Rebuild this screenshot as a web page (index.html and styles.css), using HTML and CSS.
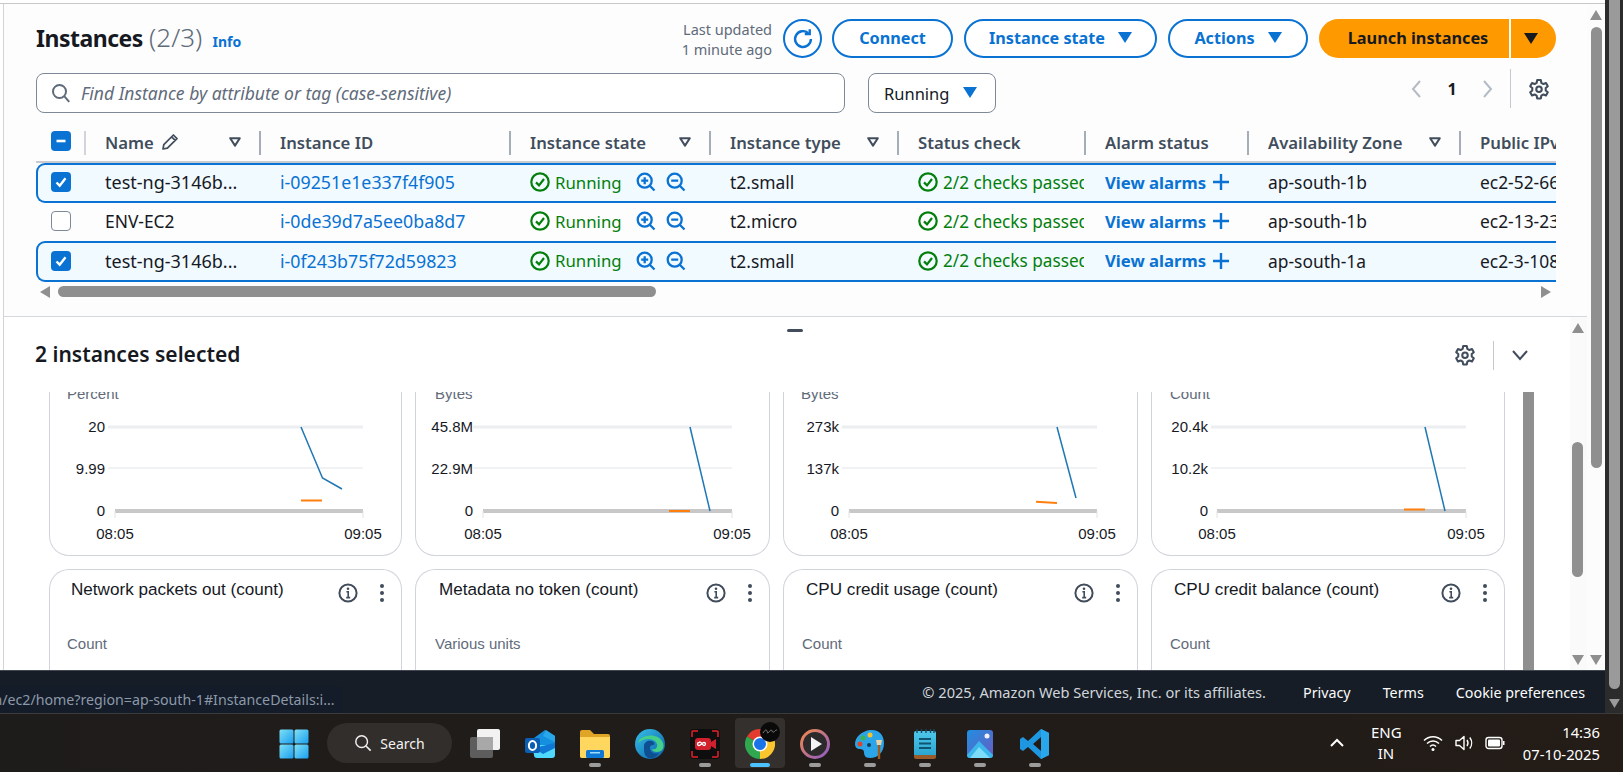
FILE: index.html
```html
<!DOCTYPE html>
<html lang="en">
<head>
<meta charset="utf-8">
<title>Instances | EC2</title>
<link rel="stylesheet" href="styles.css">
</head>
<body>
<svg class="sprite" aria-hidden="true">
  <symbol id="i-gear" viewBox="0 0 16 16"><path d="M6.7 1.5h2.6l.4 2 1.5.9 1.9-.7 1.3 2.3-1.5 1.3v1.8l1.5 1.3-1.3 2.3-1.9-.7-1.5.9-.4 2H6.7l-.4-2-1.5-.9-1.9.7-1.3-2.3 1.5-1.3V7.3L1.6 6l1.3-2.3 1.9.7 1.5-.9z" fill="none" stroke="currentColor" stroke-width="1.5" stroke-linejoin="round"/><circle cx="8" cy="8.2" r="2" fill="none" stroke="currentColor" stroke-width="1.5"/></symbol>
  <symbol id="i-filter" viewBox="0 0 14 14"><path d="M2.2 3.2h9.6L7 10.6z" fill="none" stroke="currentColor" stroke-width="2" stroke-linejoin="round"/></symbol>
  <symbol id="i-caret" viewBox="0 0 14 12"><path d="M0 0h14L7 11z" fill="currentColor"/></symbol>
  <symbol id="i-ok" viewBox="0 0 20 20"><circle cx="10" cy="10" r="8.7" fill="none" stroke="currentColor" stroke-width="2.200"/><path d="M6 10.400l3 3 5-6.400" fill="none" stroke="currentColor" stroke-width="2.200"/></symbol>
  <symbol id="i-zin" viewBox="0 0 20 20"><circle cx="8.700" cy="8.700" r="7" fill="none" stroke="currentColor" stroke-width="2.300"/><path d="M5.200 8.700h7M8.700 5.200v7M13.800 13.800l4.700 4.700" fill="none" stroke="currentColor" stroke-width="2.300"/></symbol>
  <symbol id="i-zout" viewBox="0 0 20 20"><circle cx="8.700" cy="8.700" r="7" fill="none" stroke="currentColor" stroke-width="2.300"/><path d="M5.200 8.700h7M13.800 13.800l4.700 4.700" fill="none" stroke="currentColor" stroke-width="2.300"/></symbol>
  <symbol id="i-plus" viewBox="0 0 16 16"><path d="M8 0v16M0 8h16" fill="none" stroke="currentColor" stroke-width="2.400"/></symbol>
  <symbol id="i-check" viewBox="0 0 20 20"><rect width="20" height="20" rx="4" fill="#0972d3"/><path d="M5.500 10.500l3.200 3.200 5.800-7.400" fill="none" stroke="#fff" stroke-width="2.400"/></symbol>
  <symbol id="i-info" viewBox="0 0 20 20"><circle cx="10" cy="10" r="8.600" fill="none" stroke="currentColor" stroke-width="2"/><circle cx="10" cy="5.800" r="1.300" fill="currentColor"/><path d="M8.400 8.800H10.200V14.400M8.200 14.600h4" fill="none" stroke="currentColor" stroke-width="1.600"/></symbol>
  <symbol id="i-dots" viewBox="0 0 6 20"><circle cx="3" cy="3" r="2" fill="currentColor"/><circle cx="3" cy="10" r="2" fill="currentColor"/><circle cx="3" cy="17" r="2" fill="currentColor"/></symbol>
  <symbol id="tri-up" viewBox="0 0 12 10"><path d="M6 0l6 10H0z" fill="currentColor"/></symbol>
  <symbol id="tri-down" viewBox="0 0 12 10"><path d="M6 10L0 0h12z" fill="currentColor"/></symbol>
</svg>

<div class="app">
  <div class="main">
    <div class="content">
      <div class="panels">
        <section class="upper">
          <header class="top-bar">
            <h1 class="page-title"><span class="title-main">Instances</span> <span class="count">(2/3)</span> <a class="info-link">Info</a></h1>
            <div class="actions">
              <div class="updated">Last updated<br>1 minute ago</div>
              <button class="btn btn-icon"><svg class="refresh" viewBox="0 0 20 20"><path d="M16.600 10a6.600 6.600 0 1 1-2.200-4.900" fill="none" stroke="currentColor" stroke-width="2"/><path d="M15.600 1.800v4.100h-4.100" fill="none" stroke="currentColor" stroke-width="2"/></svg></button>
              <button class="btn btn-connect">Connect</button>
              <button class="btn btn-state">Instance state<svg class="caret"><use href="#i-caret"/></svg></button>
              <button class="btn btn-actions">Actions<svg class="caret"><use href="#i-caret"/></svg></button>
              <div class="launch"><span class="launch-main">Launch instances</span><span class="launch-drop"><svg class="caret"><use href="#i-caret"/></svg></span></div>
            </div>
          </header>

          <div class="filter-bar">
            <div class="search">
              <svg class="search-icon" viewBox="0 0 20 20"><circle cx="8.500" cy="8.500" r="6.500" fill="none" stroke="currentColor" stroke-width="2"/><path d="M13.200 13.200l5 5.600" fill="none" stroke="currentColor" stroke-width="2"/></svg>
              <span class="placeholder">Find Instance by attribute or tag (case-sensitive)</span>
            </div>
            <div class="select">Running<svg class="caret"><use href="#i-caret"/></svg></div>
            <div class="pager">
              <svg class="pg-arrow" viewBox="0 0 12 20"><path d="M10 2L3 10l7 8" fill="none" stroke="currentColor" stroke-width="2"/></svg>
              <span class="pg-num">1</span>
              <svg class="pg-arrow" viewBox="0 0 12 20"><path d="M2 2l7 8-7 8" fill="none" stroke="currentColor" stroke-width="2"/></svg>
              <span class="pg-sep"></span>
              <svg class="gear"><use href="#i-gear"/></svg>
            </div>
          </div>

          <div class="table">
            <div class="row head">
              <div class="cell sel"><svg class="box" viewBox="0 0 20 20"><rect width="20" height="20" rx="4" fill="#0972d3"/><path d="M5.500 10h9" stroke="#fff" stroke-width="2.600"/></svg></div>
              <div class="cell th first">Name <svg class="pencil" viewBox="0 0 18 18"><path d="M2 16l.8-4.400L12.400 2l3.600 3.600-9.600 9.600zM10.600 3.800l3.600 3.600" fill="none" stroke="currentColor" stroke-width="1.700" stroke-linejoin="round"/></svg><svg class="filter"><use href="#i-filter"/></svg></div>
              <div class="cell th">Instance ID</div>
              <div class="cell th">Instance state<svg class="filter"><use href="#i-filter"/></svg></div>
              <div class="cell th">Instance type<svg class="filter"><use href="#i-filter"/></svg></div>
              <div class="cell th">Status check</div>
              <div class="cell th">Alarm status</div>
              <div class="cell th">Availability Zone<svg class="filter"><use href="#i-filter"/></svg></div>
              <div class="cell th">Public IPv4 DNS</div>
            </div>

            <div class="row selected">
              <div class="cell sel"><svg class="box"><use href="#i-check"/></svg></div>
              <div class="cell td name">test-ng-3146b...</div>
              <div class="cell td"><a class="link">i-09251e1e337f4f905</a></div>
              <div class="cell td ok running"><svg class="s-icon"><use href="#i-ok"/></svg>Running<svg class="z-icon first-z"><use href="#i-zin"/></svg><svg class="z-icon"><use href="#i-zout"/></svg></div>
              <div class="cell td">t2.small</div>
              <div class="cell td ok checks"><svg class="s-icon"><use href="#i-ok"/></svg>2/2 checks passed</div>
              <div class="cell td alarm">View alarms<svg class="plus"><use href="#i-plus"/></svg></div>
              <div class="cell td">ap-south-1b</div>
              <div class="cell td">ec2-52-66-120-14.ap-south-1</div>
            </div>

            <div class="row plain">
              <div class="cell sel"><span class="box-empty"></span></div>
              <div class="cell td">ENV-EC2</div>
              <div class="cell td"><a class="link">i-0de39d7a5ee0ba8d7</a></div>
              <div class="cell td ok running"><svg class="s-icon"><use href="#i-ok"/></svg>Running<svg class="z-icon first-z"><use href="#i-zin"/></svg><svg class="z-icon"><use href="#i-zout"/></svg></div>
              <div class="cell td">t2.micro</div>
              <div class="cell td ok checks"><svg class="s-icon"><use href="#i-ok"/></svg>2/2 checks passed</div>
              <div class="cell td alarm">View alarms<svg class="plus"><use href="#i-plus"/></svg></div>
              <div class="cell td">ap-south-1b</div>
              <div class="cell td">ec2-13-233-40-11.ap-south-1</div>
            </div>

            <div class="row selected last">
              <div class="cell sel"><svg class="box"><use href="#i-check"/></svg></div>
              <div class="cell td name">test-ng-3146b...</div>
              <div class="cell td"><a class="link">i-0f243b75f72d59823</a></div>
              <div class="cell td ok running"><svg class="s-icon"><use href="#i-ok"/></svg>Running<svg class="z-icon first-z"><use href="#i-zin"/></svg><svg class="z-icon"><use href="#i-zout"/></svg></div>
              <div class="cell td">t2.small</div>
              <div class="cell td ok checks"><svg class="s-icon"><use href="#i-ok"/></svg>2/2 checks passed</div>
              <div class="cell td alarm">View alarms<svg class="plus"><use href="#i-plus"/></svg></div>
              <div class="cell td">ap-south-1a</div>
              <div class="cell td">ec2-3-108-77-9.ap-south-1</div>
            </div>
          </div>

          <div class="hscroll">
            <svg class="h-arrow" viewBox="0 0 10 12"><path d="M0 6l10-6v12z" fill="currentColor"/></svg>
            <span class="h-thumb"></span>
            <svg class="h-arrow end" viewBox="0 0 10 12"><path d="M10 6L0 0v12z" fill="currentColor"/></svg>
          </div>
        </section>

        <section class="lower">
          <div class="lower-main">
            <div class="lower-head">
              <span class="handle"></span>
              <div class="lower-bar">
                <h2 class="lower-title">2 instances selected</h2>
                <svg class="gear"><use href="#i-gear"/></svg>
                <span class="lower-sep"></span>
                <svg class="chev" viewBox="0 0 18 12"><path d="M2 2l7 8 7-8" fill="none" stroke="currentColor" stroke-width="2"/></svg>
              </div>
            </div>
            <div class="chart-area">
              <div class="chart-grid">
                <div class="card card-top">
                  <svg class="chart" viewBox="0 0 353 164">
                    <text class="t-unit" x="17" y="7">Percent</text>
                    <path class="grid-a" d="M58 35H313"/><path class="grid-b" d="M58 76H313"/><path class="base" d="M65 119H313"/><path class="tick" d="M65 119v7M313 119v7"/>
                    <text class="t-y" x="55" y="40">20</text><text class="t-y" x="55" y="82">9.99</text><text class="t-y" x="55" y="124">0</text>
                    <text class="t-x" x="65" y="147">08:05</text><text class="t-x" x="313" y="147">09:05</text>
                    <path class="l-blue" d="M251 35L272.500 86L292 97"/><path class="l-orange" d="M251 108.500H272"/>
                  </svg>
                </div>
                <div class="card card-top">
                  <svg class="chart" viewBox="0 0 353 164">
                    <text class="t-unit" x="19" y="7">Bytes</text>
                    <path class="grid-a" d="M57 35H316"/><path class="grid-b" d="M57 76H316"/><path class="base" d="M67 119H316"/><path class="tick" d="M67 119v7M316 119v7"/>
                    <text class="t-y" x="57" y="40">45.8M</text><text class="t-y" x="57" y="82">22.9M</text><text class="t-y" x="57" y="124">0</text>
                    <text class="t-x" x="67" y="147">08:05</text><text class="t-x" x="316" y="147">09:05</text>
                    <path class="l-blue" d="M274 35L294 119"/><path class="l-orange" d="M253 119H274"/>
                  </svg>
                </div>
                <div class="card card-top">
                  <svg class="chart" viewBox="0 0 353 164">
                    <text class="t-unit" x="17" y="7">Bytes</text>
                    <path class="grid-a" d="M58 35H313"/><path class="grid-b" d="M58 76H313"/><path class="base" d="M65 119H313"/><path class="tick" d="M65 119v7M313 119v7"/>
                    <text class="t-y" x="55" y="40">273k</text><text class="t-y" x="55" y="82">137k</text><text class="t-y" x="55" y="124">0</text>
                    <text class="t-x" x="65" y="147">08:05</text><text class="t-x" x="313" y="147">09:05</text>
                    <path class="l-blue" d="M273 35L292 106"/><path class="l-orange" d="M252 109.700L273 111"/>
                  </svg>
                </div>
                <div class="card card-top">
                  <svg class="chart" viewBox="0 0 353 164">
                    <text class="t-unit" x="18" y="7">Count</text>
                    <path class="grid-a" d="M59 35H314"/><path class="grid-b" d="M59 76H314"/><path class="base" d="M65 119H314"/><path class="tick" d="M65 119v7M314 119v7"/>
                    <text class="t-y" x="56" y="40">20.4k</text><text class="t-y" x="56" y="82">10.2k</text><text class="t-y" x="56" y="124">0</text>
                    <text class="t-x" x="65" y="147">08:05</text><text class="t-x" x="314" y="147">09:05</text>
                    <path class="l-blue" d="M273 35L293 119"/><path class="l-orange" d="M252 117.500H273"/>
                  </svg>
                </div>

                <div class="card card-bottom">
                  <div class="card-head"><span class="card-title">Network packets out (count)</span><svg class="c-info"><use href="#i-info"/></svg><svg class="c-dots"><use href="#i-dots"/></svg></div>
                  <div class="card-unit">Count</div>
                </div>
                <div class="card card-bottom">
                  <div class="card-head"><span class="card-title">Metadata no token (count)</span><svg class="c-info"><use href="#i-info"/></svg><svg class="c-dots"><use href="#i-dots"/></svg></div>
                  <div class="card-unit">Various units</div>
                </div>
                <div class="card card-bottom">
                  <div class="card-head"><span class="card-title">CPU credit usage (count)</span><svg class="c-info"><use href="#i-info"/></svg><svg class="c-dots"><use href="#i-dots"/></svg></div>
                  <div class="card-unit">Count</div>
                </div>
                <div class="card card-bottom">
                  <div class="card-head"><span class="card-title">CPU credit balance (count)</span><svg class="c-info"><use href="#i-info"/></svg><svg class="c-dots"><use href="#i-dots"/></svg></div>
                  <div class="card-unit">Count</div>
                </div>
              </div>
              <span class="inner-thumb"></span>
            </div>
          </div>
          <div class="lower-scroll">
            <svg class="v-arrow"><use href="#tri-up"/></svg>
            <span class="lower-thumb"></span>
            <svg class="v-arrow down"><use href="#tri-down"/></svg>
          </div>
        </section>
      </div>
      <div class="page-scroll">
        <svg class="v-arrow"><use href="#tri-up"/></svg>
        <span class="page-thumb"></span>
        <svg class="v-arrow down"><use href="#tri-down"/></svg>
      </div>
    </div>
    <footer class="footer">
      <span class="status-url">m/ec2/home?region=ap-south-1#InstanceDetails:i...</span>
      <span class="copy">© 2025, Amazon Web Services, Inc. or its affiliates.</span>
      <a class="f-link">Privacy</a>
      <a class="f-link">Terms</a>
      <a class="f-link">Cookie preferences</a>
    </footer>
  </div>
  <div class="browser-scroll">
    <span class="browser-thumb"></span>
    <svg class="browser-arrow"><use href="#tri-down"/></svg>
  </div>
</div>

<div class="taskbar">
  <div class="slot">
    <svg class="tb-icon" viewBox="0 0 30 30"><defs><linearGradient id="w1" x1="0" y1="0" x2="1" y2="1"><stop offset="0" stop-color="#7fe0f5"/><stop offset="1" stop-color="#1a9ff0"/></linearGradient></defs><rect x="0.500" y="0.500" width="14" height="14" rx="1.500" fill="url(#w1)"/><rect x="15.500" y="0.500" width="14" height="14" rx="1.500" fill="url(#w1)"/><rect x="0.500" y="15.500" width="14" height="14" rx="1.500" fill="url(#w1)"/><rect x="15.500" y="15.500" width="14" height="14" rx="1.500" fill="url(#w1)"/></svg>
  </div>
  <div class="tb-search">
    <svg class="tb-search-icon" viewBox="0 0 20 20"><circle cx="8.500" cy="8.500" r="6.500" fill="none" stroke="currentColor" stroke-width="1.600"/><path d="M13.300 13.300l5.200 5.200" fill="none" stroke="currentColor" stroke-width="1.800"/></svg>Search
  </div>
  <div class="slot">
    <svg class="tb-icon" viewBox="0 0 30 30"><rect x="0" y="8" width="23" height="21" rx="2" fill="#5d5d5d"/><rect x="7" y="0" width="23" height="21" rx="2" fill="#f2f2f2"/><rect x="7" y="8" width="16" height="13" fill="#a8a8a8"/></svg>
  </div>
  <div class="slot">
    <svg class="tb-icon" viewBox="0 0 30 30"><path d="M9 9L20 1l10 6v9H9z" fill="#1490df"/><path d="M18 7l3-6 9 6v6z" fill="#28a8ea"/><path d="M7 16h23v10a3 3 0 0 1-3 3H12a3 3 0 0 1-3-3z" fill="#50d9ff"/><path d="M30 14v5L18 25l-9-6z" fill="#0f78d4"/><rect x="0" y="9" width="15" height="15" rx="2" fill="#0a5fb4"/><ellipse cx="7.500" cy="16.500" rx="3.600" ry="4.500" fill="none" stroke="#fff" stroke-width="2"/></svg>
  </div>
  <div class="slot">
    <svg class="tb-icon" viewBox="0 0 30 30"><path d="M0 3a2 2 0 0 1 2-2h8l4 4h14a2 2 0 0 1 2 2v20a2 2 0 0 1-2 2H2a2 2 0 0 1-2-2z" fill="#e0a526"/><path d="M0 8h30v19a2 2 0 0 1-2 2H2a2 2 0 0 1-2-2z" fill="#ffd75e"/><rect x="6" y="21" width="18" height="8" rx="1.500" fill="#0f78d4"/><rect x="10" y="23" width="10" height="1.500" fill="#9fdcff"/></svg>
    <span class="dot"></span>
  </div>
  <div class="slot">
    <svg class="tb-icon" viewBox="0 0 30 30"><defs><linearGradient id="e1" x1="0" y1="0" x2="1" y2="1"><stop offset="0" stop-color="#36c0e8"/><stop offset="1" stop-color="#0b5fa8"/></linearGradient></defs><circle cx="15" cy="15" r="15" fill="url(#e1)"/><path d="M3 14C5 5 24 3 28 14c2 6-2 9-6 9-3 0-5-1-5-3 3 1 6-1 5-5-2-6-13-7-19-1z" fill="#45d08a"/><path d="M9 17c0-4 4-6 8-5 3 1 3 4 1 4-3 0-4 3-2 6s6 3 8 2c-3 5-9 7-12 4-3-2-3-7-3-11z" fill="#0d4f91"/></svg>
  </div>
  <div class="slot">
    <svg class="tb-icon" viewBox="0 0 30 30"><rect x="0" y="0" width="30" height="30" rx="4" fill="#0e0e0e"/><path d="M2 8V3a1 1 0 0 1 1-1h5M22 2h5a1 1 0 0 1 1 1v5M28 22v5a1 1 0 0 1-1 1h-5M8 28H3a1 1 0 0 1-1-1v-5" fill="none" stroke="#e8202c" stroke-width="1.500"/><rect x="5" y="9" width="16" height="12" rx="3" fill="#d21f2d"/><path d="M21 13l5-3v10l-5-3z" fill="#d21f2d"/><path d="M9 13.500c2-2 3 3 5 3s2-3 0-3-3 3-5 3-2-3 0-3z" fill="none" stroke="#fff" stroke-width="1.300"/></svg>
    <span class="dot"></span>
  </div>
  <div class="slot active">
    <svg class="tb-icon" viewBox="0 0 30 30"><path d="M15 15L2 7.500A15 15 0 0 1 28 7.500z" fill="#e33b2e"/><path d="M15 15L28 7.500A15 15 0 0 1 15 30z" fill="#fbc52d"/><path d="M15 15L15 30A15 15 0 0 1 2 7.500z" fill="#2fa84f"/><circle cx="15" cy="15" r="7.500" fill="#fff"/><circle cx="15" cy="15" r="6" fill="#1a73e8"/></svg>
    <svg class="sticker" viewBox="0 0 20 20"><circle cx="10" cy="10" r="10" fill="#0a0a0a"/><path d="M3 11c2-3 3-4 4-2s0 3 2 1 2-3 3-1 2 1 3 0 1-1 2-1" fill="none" stroke="#9b9b9b" stroke-width="0.800"/></svg>
    <span class="dot dot-active"></span>
  </div>
  <div class="slot">
    <svg class="tb-icon" viewBox="0 0 30 30"><defs><linearGradient id="p1" x1="0" y1="0" x2="1" y2="1"><stop offset="0" stop-color="#f08a4b"/><stop offset="1" stop-color="#8e5bc8"/></linearGradient></defs><circle cx="15" cy="15" r="13.500" fill="#2c2a2a" stroke="url(#p1)" stroke-width="3"/><path d="M11 8l11 7-11 7z" fill="#f5f5f5"/></svg>
    <span class="dot"></span>
  </div>
  <div class="slot">
    <svg class="tb-icon" viewBox="0 0 30 30"><path d="M15 1C24 0 29 6 29 14c0 9-6 15-14 15-5 0-6-3-6-6 0-2-2-3-4-3-3 0-5-2-5-5C0 8 7 2 15 1z" fill="#2ba5e8"/><circle cx="8" cy="9" r="2.500" fill="#3fb24f"/><circle cx="15" cy="6" r="2.500" fill="#f5c52d"/><circle cx="5" cy="15" r="2.500" fill="#d9472b"/><circle cx="14" cy="16" r="2" fill="#143b5e"/><path d="M21 11h6l-1 5h-4z" fill="#e8d2a6"/><rect x="22.800" y="16" width="2.400" height="14" fill="#a05a1e"/></svg>
    <span class="dot"></span>
  </div>
  <div class="slot">
    <svg class="tb-icon" viewBox="0 0 30 30"><defs><linearGradient id="n1" x1="0" y1="0" x2="0" y2="1"><stop offset="0" stop-color="#4fc7ea"/><stop offset="1" stop-color="#27a3d0"/></linearGradient></defs><rect x="4" y="2" width="22" height="26" rx="2" fill="url(#n1)"/><path d="M4 26h22v2a2 2 0 0 1-2 2H6a2 2 0 0 1-2-2z" fill="#9a5b2a"/><path d="M7 0v4M11.500 0v4M16 0v4M20.500 0v4M24 0v4" stroke="#19485f" stroke-width="1.400"/><path d="M9 10h12M9 14.500h12M9 19h12" stroke="#11546f" stroke-width="2"/></svg>
    <span class="dot"></span>
  </div>
  <div class="slot">
    <svg class="tb-icon" viewBox="0 0 30 30"><defs><linearGradient id="ph1" x1="0" y1="0" x2="1" y2="1"><stop offset="0" stop-color="#1f8fe0"/><stop offset="1" stop-color="#6a5bc2"/></linearGradient></defs><rect x="2" y="1" width="26" height="28" rx="3" fill="url(#ph1)"/><circle cx="22" cy="7" r="2.500" fill="#f0f0f8"/><path d="M2 26L14 12l14 14v0a3 3 0 0 1-3 3H5a3 3 0 0 1-3-3z" fill="#3db6ec"/><path d="M5 29l9-11 11 11z" fill="#7ddcf7"/></svg>
    <span class="dot"></span>
  </div>
  <div class="slot">
    <svg class="tb-icon" viewBox="0 0 30 30"><path d="M21 0l8 4v22l-8 4L8 18l-5 4-3-2v-10l3-2 5 4z" fill="#1f96e0"/><path d="M21 0l8 4v22l-8 4z" fill="#2aa6ec"/><path d="M21 8v14l-8-7z" fill="#211c18"/></svg>
    <span class="dot"></span>
  </div>
  <div class="tray">
    <svg class="tray-chev" viewBox="0 0 16 10"><path d="M2 8l6-6 6 6" fill="none" stroke="currentColor" stroke-width="2"/></svg>
    <div class="lang">ENG<br>IN</div>
    <svg class="tray-icon" viewBox="0 0 20 20"><path d="M1 7.500c5-5 13-5 18 0M4 10.500c3.500-3.500 8.500-3.500 12 0M7 13.500c2-2 4-2 6 0" fill="none" stroke="currentColor" stroke-width="1.500"/><circle cx="10" cy="16.500" r="1.500" fill="currentColor"/></svg>
    <svg class="tray-icon" viewBox="0 0 20 20"><path d="M2 7.500h3.500L10 3.500v13L5.500 12.500H2z" fill="none" stroke="currentColor" stroke-width="1.400" stroke-linejoin="round"/><path d="M13 7c1.200 1.800 1.200 4.200 0 6M15.800 4.500c2.400 3.200 2.400 7.800 0 11" fill="none" stroke="currentColor" stroke-width="1.400"/></svg>
    <svg class="tray-icon" viewBox="0 0 20 20"><rect x="1" y="4.500" width="16" height="11" rx="2.500" fill="none" stroke="currentColor" stroke-width="1.400"/><rect x="3" y="6.500" width="12" height="7" rx="1" fill="currentColor"/><rect x="18" y="8" width="1.500" height="4" fill="currentColor"/></svg>
    <div class="clock">14:36<br>07-10-2025</div>
  </div>
</div>
</body>
</html>
```
FILE: styles.css
```css
* { box-sizing: border-box; }
html, body { margin: 0; padding: 0; }
body { width: 1623px; height: 772px; overflow: hidden; background: #fff; font-family: "Noto Sans", sans-serif; color: #16191f; }
svg { display: block; flex: none; }
.sprite { width: 0; height: 0; }
a { color: inherit; }
button { font-family: inherit; }

.app { display: flex; height: 713px; }
.main { width: 1605px; display: flex; flex-direction: column; }
.content { display: flex; margin-top: 3px; border-top: 1px solid #c9c9c9; height: 667px; overflow: hidden; }
.panels { margin-left: 3px; width: 1584px; border-left: 1px solid #d4d4d4; display: flex; flex-direction: column; background: #fff; }

/* upper */
.upper { height: 313px; padding: 15px 31px 0 32px; background: #fdfdfd; border-bottom: 1px solid #d5d8dc; display: flex; flex-direction: column; flex: none; }
.top-bar { display: flex; justify-content: space-between; align-items: center; height: 39px; flex: none; }
.page-title { margin: 0; padding-top: 2px; font-size: 24px; line-height: 37px; font-weight: 700; color: #16191f; }
.title-main { font-size: 23px; letter-spacing: -0.5px; }
.count { font-size: 26px; font-weight: 300; color: #5f6b7a; }
.info-link { font-size: 14px; font-weight: 700; color: #0972d3; margin-left: 4px; }
.actions { display: flex; align-items: center; gap: 11px; }
.updated { font-size: 14.500px; line-height: 20px; color: #5f6b7a; text-align: right; }
.btn { height: 39px; border: 2px solid #0972d3; border-radius: 20px; background: #fff; color: #0972d3; font-size: 16.200px; font-weight: 700; padding: 0 0 2px; display: flex; align-items: center; justify-content: center; gap: 13px; }
.btn-icon { width: 39px; padding: 0; margin-right: -1px; }
.refresh { width: 24px; height: 24px; }
.btn-connect { width: 121px; }
.btn-state { width: 193px; }
.btn-actions { width: 140px; }
.caret { width: 14px; height: 12px; }
.launch { display: flex; width: 237px; height: 39px; font-size: 16.300px; font-weight: 700; color: #16191f; }
.launch-main { width: 190px; background: #ff9900; border-radius: 20px 0 0 20px; display: flex; align-items: center; justify-content: center; padding: 0 0 2px 8px; }
.launch-drop { margin-left: 2px; width: 45px; background: #ff9900; border-radius: 0 20px 20px 0; display: flex; align-items: center; justify-content: center; padding-right: 6px; }

.filter-bar { display: flex; align-items: flex-start; margin-top: 15px; height: 40px; flex: none; }
.search { width: 809px; height: 40px; border: 1px solid #7d8998; border-radius: 8px; background: #fff; display: flex; align-items: center; padding-left: 14px; gap: 10px; }
.search-icon { width: 20px; height: 20px; color: #5f6b7a; }
.placeholder { font-style: italic; font-size: 17.500px; color: #5f6b7a; }
.select { margin-left: 23px; width: 128px; height: 40px; border: 1px solid #7d8998; border-radius: 8px; background: #fff; display: flex; align-items: center; font-size: 16.500px; padding-left: 15px; gap: 14px; }
.select .caret { color: #0972d3; }
.pager { margin-left: auto; display: flex; align-items: center; height: 39px; margin-top: -4px; color: #16191f; }
.pg-arrow { width: 12px; height: 20px; color: #b4bbc4; }
.pg-num { font-size: 16px; font-weight: 700; width: 60px; text-align: center; }
.pg-sep { width: 1px; height: 39px; background: #c6c6cd; margin-left: 16px; }
.gear { width: 22px; height: 22px; color: #414d5c; }
.pager .gear { margin-left: 17px; margin-right: 6px; }

/* table */
.table { margin-top: 14px; overflow: hidden; flex: none; width: 1520px; }
.row { display: grid; grid-template-columns: 48px 175px 250px 200px 188px 187px 163px 212px 320px; width: 1745px; align-items: center; padding-bottom: 2px; }
.head { height: 36px; border-bottom: 2px solid #c8ccd1; align-items: start; padding: 4px 0 0; font-size: 16.700px; }
.selected { height: 40px; background: #f1faff; box-shadow: inset 0 0 0 2px #0972d3; border-radius: 9px 0 0 9px; }
.plain { height: 38px; }
.last { height: 41px; }
.cell { display: flex; align-items: center; white-space: nowrap; overflow: hidden; }
.sel { padding-left: 15px; }
.box { width: 20px; height: 20px; }
.box-empty { width: 20px; height: 20px; border: 1px solid #7d8998; border-radius: 4px; background: #fff; }
.th { height: 24px; border-left: 2px solid #a5adb7; padding: 0 17px 2px 19px; font-weight: 600; color: #414d5c; }
.th.first { border-left-color: #d1d5db; }
.pencil { width: 18px; height: 18px; margin-left: 7px; color: #414d5c; }
.filter { width: 14px; height: 14px; margin-left: auto; color: #414d5c; }
.td { padding-left: 21px; font-size: 17.400px; }
.name { font-size: 18px; }
.link { color: #0972d3; font-size: 17.800px; }
.ok { color: #037f0c; }
.running { font-size: 16.800px; }
.checks { font-size: 17.200px; }
.s-icon { width: 20px; height: 20px; margin-right: 5px; }
.z-icon { width: 20px; height: 20px; margin-left: 10px; color: #0972d3; }
.first-z { margin-left: 14px; }
.alarm { color: #0972d3; font-weight: 700; font-size: 16.700px; }
.plus { width: 16px; height: 16px; margin-left: 7px; }

.hscroll { display: flex; align-items: center; height: 11px; margin-top: 4px; padding: 0 5px 0 4px; color: #8f8f8f; flex: none; }
.h-arrow { width: 10px; height: 12px; }
.h-thumb { margin-left: 8px; width: 598px; height: 11px; border-radius: 6px; background: #8f8f8f; }
.h-arrow.end { margin-left: auto; }

/* lower */
.lower { flex: 1; display: flex; min-height: 0; background: #fff; }
.lower-main { width: 1566px; display: flex; flex-direction: column; min-width: 0; }
.lower-head { height: 75px; padding-left: 31px; flex: none; display: flex; flex-direction: column; }
.handle { width: 16px; height: 3px; background: #414d5c; border-radius: 2px; margin: 12px 0 0 752px; }
.lower-bar { display: flex; align-items: center; margin-top: 8px; height: 30px; padding-right: 42px; }
.lower-title { margin: -2px auto 0 0; font-size: 21px; font-weight: 600; color: #16191f; }
.lower-sep { width: 1px; height: 29px; background: #c6c6cd; margin: 0 17px 0 17px; }
.chev { width: 18px; height: 12px; color: #414d5c; margin-right: -1px; }

.chart-area { flex: 1; display: flex; min-height: 0; overflow: hidden; padding-left: 45px; }
.chart-grid { display: grid; grid-template-columns: 353px 355px 355px 354px; grid-template-rows: 164px 1fr; gap: 13px; width: 1456px; flex: none; }
.card { background: #fff; border: 1px solid #d1d5db; font-family: "Liberation Sans", Arial, sans-serif; overflow: hidden; }
.card-top { border-top: 0; border-radius: 0 0 20px 20px; }
.card-bottom { border-bottom: 0; border-radius: 20px 20px 0 0; padding: 0 0 0 22px; }
.card-bottom:nth-child(5) { padding-left: 21px; }
.card-bottom:nth-child(6) { padding-left: 23px; }
.chart { width: 353px; height: 164px; }
.chart text { font-size: 15px; }
.t-unit { fill: #5f6b7a; }
.t-y { text-anchor: end; fill: #16191f; }
.t-x { text-anchor: middle; fill: #16191f; }
.chart path { fill: none; }
.grid-a { stroke: #eceef0; stroke-width: 3; }
.grid-b { stroke: #eceef0; stroke-width: 1.500; }
.base { stroke: #c8c8c8; stroke-width: 4; }
.tick { stroke: #e1e3e6; stroke-width: 1; }
.l-blue { stroke: #1f77b4; stroke-width: 1.500; }
.l-orange { stroke: #ff7f0e; stroke-width: 2; }

.card-head { display: flex; align-items: center; height: 24px; margin-top: 11px; padding-right: 16px; }
.card-title { font-size: 17.100px; margin-right: auto; margin-top: -6px; }
.c-info { width: 20px; height: 20px; color: #414d5c; }
.c-dots { width: 6px; height: 20px; color: #414d5c; margin-left: 21px; }
.card-unit { font-size: 15px; color: #5f6b7a; margin: 30px 0 0 -4px; }

.inner-thumb { margin-left: 18px; width: 11px; background: #8f8f8f; }

.lower-scroll { flex: 1; background: #fafafa; display: flex; flex-direction: column; align-items: flex-start; padding: 6px 0 5px 2px; color: #8f8f8f; }
.v-arrow { width: 12px; height: 10px; color: #8f8f8f; }
.v-arrow.down { margin-top: auto; }
.lower-thumb { width: 11px; height: 135px; background: #8f8f8f; border-radius: 6px; margin-top: 109px; }

.page-scroll { width: 18px; background: #fcfcfc; display: flex; flex-direction: column; align-items: center; padding: 6px 0 5px; }
.page-thumb { width: 11px; height: 441px; background: #8f8f8f; border-radius: 6px; margin-top: 7px; }

.browser-scroll { width: 18px; height: 713px; background: #2b2b2b; padding-left: 4px; flex: none; }
.browser-thumb { display: block; width: 11px; height: 689px; background: #9a9a9a; border-radius: 0 0 6px 6px; }
.browser-arrow { width: 11px; height: 9px; margin-top: 10px; color: #9a9a9a; }

/* footer */
.footer { position: relative; height: 43px; background: #161d26; border-top: 1px solid #414750; display: flex; align-items: center; justify-content: flex-end; gap: 32px; padding: 0 20px 0 0; font-size: 14.300px; flex: none; }
.copy { font-size: 14.600px; color: #d1d5db; margin-right: 5px; }
.f-link { color: #fbfbfb; }
.status-url { position: absolute; left: 0; bottom: 0; width: 342px; height: 27px; background: #131c28; color: #8d99a8; font-size: 14.200px; line-height: 27px; text-indent: -11px; white-space: nowrap; overflow: hidden; }

/* taskbar */
.taskbar { height: 59px; display: flex; padding-left: 266px; background: linear-gradient(90deg, #1e1c1b, #231c17); border-top: 1px solid #3b3b3b; color: #fff; }
.slot { position: relative; width: 55px; height: 58px; display: flex; flex-direction: column; align-items: center; padding-top: 15px; }
.slot.active::before { content: ""; position: absolute; left: 2.500px; top: 4px; width: 50px; height: 50px; background: #34302d; border-radius: 4px; }
.tb-icon { position: relative; width: 30px; height: 30px; }
.sticker { position: absolute; left: 28px; top: 8px; width: 20px; height: 20px; }
.dot { position: relative; margin-top: 4px; width: 12px; height: 4px; border-radius: 2px; background: #9c9c9c; }
.dot-active { width: 20px; background: #4cc2ff; }
.tb-search { width: 125px; height: 40px; margin: 9px 5px 0 6px; border-radius: 20px; background: #322e2b; display: flex; align-items: center; justify-content: center; gap: 8px; font-size: 14px; color: #f2f2f2; }
.tb-search-icon { width: 18px; height: 18px; }
.tray { margin-left: auto; display: flex; align-items: center; padding-right: 23px; }
.tray-chev { width: 16px; height: 10px; margin-right: 26px; }
.lang { width: 30px; font-size: 15px; line-height: 21px; text-align: center; margin-right: 22px; }
.tray-icon { width: 20px; height: 20px; margin-right: 11px; }
.clock { width: 80px; margin-left: 4px; font-size: 14.800px; line-height: 22px; text-align: right; }
```
